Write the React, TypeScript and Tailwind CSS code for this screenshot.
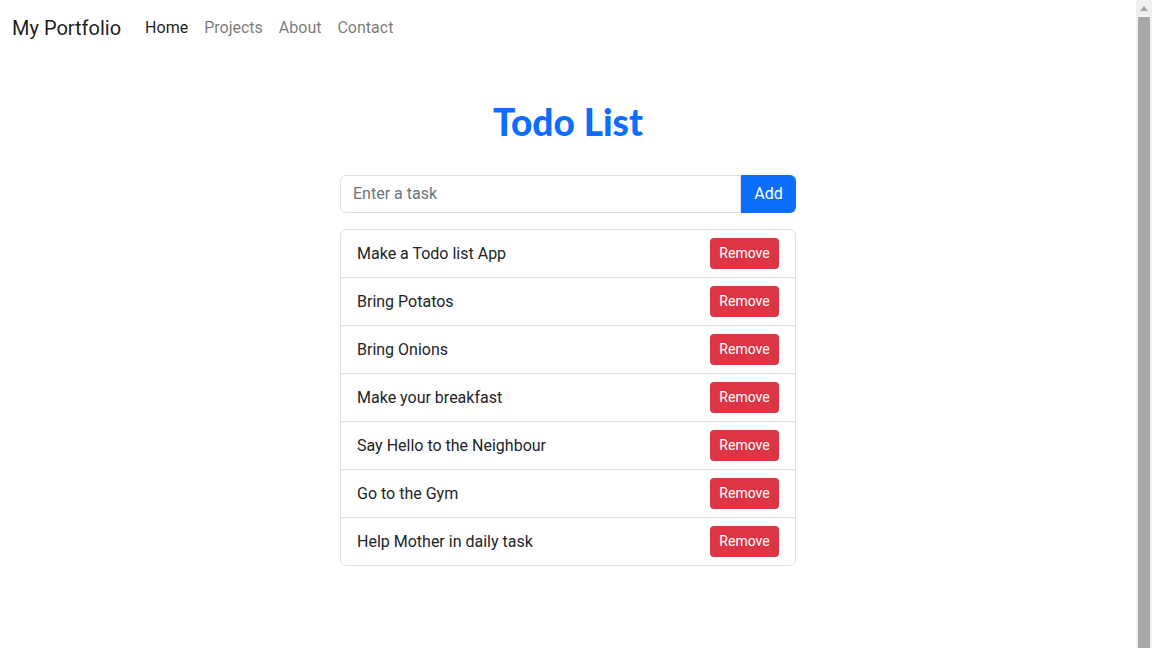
const todos = [
  'Make a Todo list App',
  'Bring Potatos',
  'Bring Onions',
  'Make your breakfast',
  'Say Hello to the Neighbour',
  'Go to the Gym',
  'Help Mother in daily task',
]

const App = () => {
  return (
    <div className="flex h-[648px] overflow-hidden bg-white font-['Roboto',sans-serif] text-[#212529]">
      <div className="flex-1">
        {/* Navbar */}
        <nav className="flex items-center px-3 py-2">
          <span className="mr-4 py-[5px] text-[20px] leading-[30px] text-black/90">My Portfolio</span>
          <ul className="flex text-[16px] leading-6">
            <li className="px-2 py-2 text-black/90">Home</li>
            <li className="px-2 py-2 text-black/55">Projects</li>
            <li className="px-2 py-2 text-black/55">About</li>
            <li className="px-2 py-2 text-black/55">Contact</li>
          </ul>
        </nav>

        <div className="mx-auto mt-[42px] w-[456px]">
          <h1 className="mb-[29px] text-center font-['Lato',sans-serif] text-[37px] font-black leading-[48px] text-[#0d6efd]">
            Todo List
          </h1>

          {/* Input */}
          <div className="mb-4 flex h-[38px]">
            <input
              className="flex-1 rounded-l-[6px] border border-[#dee2e6] px-3 text-[16px] text-[#212529] outline-none placeholder:text-[#6c757d]"
              placeholder="Enter a task"
            />
            <button className="w-[55px] rounded-r-[6px] bg-[#0d6efd] text-[16px] text-white">Add</button>
          </div>

          {/* List */}
          <ul className="overflow-hidden rounded-[6px] border border-[#dee2e6]">
            {todos.map((t, i) => (
              <li
                key={t}
                className={`flex items-center justify-between px-4 py-2 ${i > 0 ? 'border-t border-[#dee2e6]' : ''}`}
              >
                <span className="text-[16px]">{t}</span>
                <button className="h-[31px] w-[69px] rounded-[4px] bg-[#dc3545] text-[14px] text-white">Remove</button>
              </li>
            ))}
          </ul>
        </div>
      </div>

      {/* Scrollbar */}
      <div className="flex w-4 flex-col bg-[#f1f1f1]">
        <div className="flex h-[17px] items-center justify-center">
          <svg width="8" height="5" viewBox="0 0 8 5">
            <polygon points="4,0 8,5 0,5" fill="#a3a3a3" />
          </svg>
        </div>
        <div className="mx-[2px] flex-1 bg-[#a8a8a8]" />
      </div>
    </div>
  )
}

export default App
